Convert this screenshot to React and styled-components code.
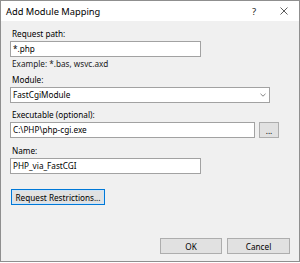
import React from 'react';
import styled, { createGlobalStyle } from 'styled-components';

const GlobalStyle = createGlobalStyle`
  html, body {
    margin: 0;
    padding: 0;
    background: #ffffff;
  }
  body {
    font-family: "Noto Sans", "Open Sans", sans-serif;
    font-size: 8.2px;
    color: #000;
  }
`;

const Window = styled.div`
  box-sizing: border-box;
  width: 300px;
  height: 262px;
  border: 1px solid #8f8f8f;
  display: flex;
  flex-direction: column;
  background: #f0f0f0;
`;

const TitleBar = styled.div`
  height: 20px;
  background: #ffffff;
  display: flex;
  align-items: center;
  padding-left: 5px;
  font-size: 9.3px;
`;

const Title = styled.div`
  flex: 1;
`;

const TitleButton = styled.div`
  width: 30px;
  height: 20px;
  display: flex;
  align-items: center;
  justify-content: center;
  font-size: 9.5px;
  color: #222;
`;

const Body = styled.div`
  flex: 1;
  display: flex;
  flex-direction: column;
  padding: 6px 9px 7px 9px;
`;

const Label = styled.div`
  height: 14px;
  line-height: 14px;
  padding-left: 2px;
  margin-top: ${p => p.$gap || 0}px;
`;

const Hint = styled.div`
  height: 13px;
  line-height: 13px;
  padding-left: 2px;
  color: #222;
`;

const Field = styled.div`
  box-sizing: border-box;
  width: ${p => p.$w}px;
  height: 16px;
  background: #ffffff;
  border: 1px solid #a2a2a2;
  display: flex;
  align-items: center;
  padding-left: 2px;
  line-height: 14px;
  white-space: nowrap;
`;

const Select = styled(Field)`
  justify-content: space-between;
  padding-right: 3px;
`;

const Row = styled.div`
  display: flex;
  align-items: center;
  gap: 4px;
`;

const Button = styled.button`
  box-sizing: border-box;
  height: 16px;
  width: ${p => p.$w}px;
  font-family: inherit;
  font-size: 8.2px;
  padding: 0;
  background: #e1e1e1;
  border: 1px solid #adadad;
  color: #000;
  white-space: nowrap;
  margin-top: ${p => p.$gap || 0}px;
`;

const DefaultButton = styled(Button)`
  border: 1px solid #0078d7;
  box-shadow: inset 0 0 0 1px #cfe4f6;
  margin-left: 1px;
`;

const Footer = styled.div`
  margin-top: auto;
  display: flex;
  justify-content: flex-end;
  gap: 5px;
`;

const Chevron = () => (
  <svg width="6" height="4" viewBox="0 0 6 4">
    <polyline points="0.5,0.8 3,3.2 5.5,0.8" fill="none" stroke="#777" strokeWidth="0.9" />
  </svg>
);

const CloseIcon = () => (
  <svg width="8" height="8" viewBox="0 0 8 8">
    <path d="M0.5 0.5 L7.5 7.5 M7.5 0.5 L0.5 7.5" stroke="#333" strokeWidth="0.8" />
  </svg>
);

export default function App() {
  return (
    <>
      <GlobalStyle />
      <Window>
        <TitleBar>
          <Title>Add Module Mapping</Title>
          <TitleButton>?</TitleButton>
          <TitleButton><CloseIcon /></TitleButton>
        </TitleBar>
        <Body>
          <Label>Request path:</Label>
          <Field $w={191}>*.php</Field>
          <Hint>Example: *.bas, wsvc.axd</Hint>
          <Label $gap={3}>Module:</Label>
          <Select $w={260}>
            <span>FastCgiModule</span>
            <Chevron />
          </Select>
          <Label $gap={5}>Executable (optional):</Label>
          <Row>
            <Field $w={245}>C:\PHP\php-cgi.exe</Field>
            <Button $w={20}>...</Button>
          </Row>
          <Label $gap={6}>Name:</Label>
          <Field $w={191}>PHP_via_FastCGI</Field>
          <DefaultButton $w={94} $gap={15}>Request Restrictions...</DefaultButton>
          <Footer>
            <Button $w={62}>OK</Button>
            <Button $w={63}>Cancel</Button>
          </Footer>
        </Body>
      </Window>
    </>
  );
}
